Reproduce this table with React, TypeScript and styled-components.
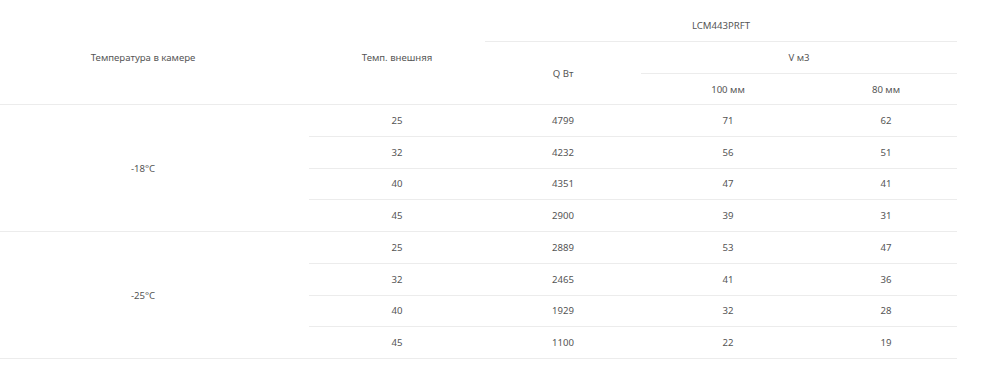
import React from "react";
import styled, { createGlobalStyle } from "styled-components";

const Global = createGlobalStyle`
  html, body { margin: 0; padding: 0; background: #fff; }
  body { font-family: "Noto Sans", "Open Sans", sans-serif; }
`;

const Wrap = styled.div`
  padding-top: 10px;
  width: 957px;
`;

const Table = styled.div`
  display: grid;
  grid-template-columns: 309px 176px 156px 174px 142px;
  grid-template-rows: 32px 32px 31px repeat(8, 31.75px);
`;

const Cell = styled.div<{ $colSpan?: number; $rowSpan?: number; $padRight?: number }>`
  grid-column: span ${(p) => p.$colSpan ?? 1};
  grid-row: span ${(p) => p.$rowSpan ?? 1};
  display: flex;
  align-items: center;
  justify-content: center;
  box-sizing: border-box;
  padding: 1px ${(p) => p.$padRight ?? 0}px 0 0;
  border-bottom: 1px solid #ececec;
  font-size: 9.6px;
  line-height: 14px;
  color: #555;
  white-space: nowrap;
`;

const HeadCell = styled(Cell)``;
const GroupCell = styled(Cell).attrs({ $rowSpan: 4, $padRight: 23 })``;
const ValueCell = styled(Cell)``;

const groups = [
  {
    label: "-18°C",
    rows: [
      ["25", "4799", "71", "62"],
      ["32", "4232", "56", "51"],
      ["40", "4351", "47", "41"],
      ["45", "2900", "39", "31"],
    ],
  },
  {
    label: "-25°C",
    rows: [
      ["25", "2889", "53", "47"],
      ["32", "2465", "41", "36"],
      ["40", "1929", "32", "28"],
      ["45", "1100", "22", "19"],
    ],
  },
];

export default function App() {
  return (
    <>
      <Global />
      <Wrap>
        <Table>
          <HeadCell $rowSpan={3} $padRight={23}>Температура в камере</HeadCell>
          <HeadCell $rowSpan={3}>Темп. внешняя</HeadCell>
          <HeadCell $colSpan={3}>LCM443PRFT</HeadCell>
          <HeadCell $rowSpan={2}>Q Вт</HeadCell>
          <HeadCell $colSpan={2}>V м3</HeadCell>
          <HeadCell>100 мм</HeadCell>
          <HeadCell>80 мм</HeadCell>
          {groups.map((g) => (
            <React.Fragment key={g.label}>
              <GroupCell>{g.label}</GroupCell>
              {g.rows.map((r, ri) =>
                r.map((v, ci) => <ValueCell key={`${ri}-${ci}`}>{v}</ValueCell>)
              )}
            </React.Fragment>
          ))}
        </Table>
      </Wrap>
    </>
  );
}
